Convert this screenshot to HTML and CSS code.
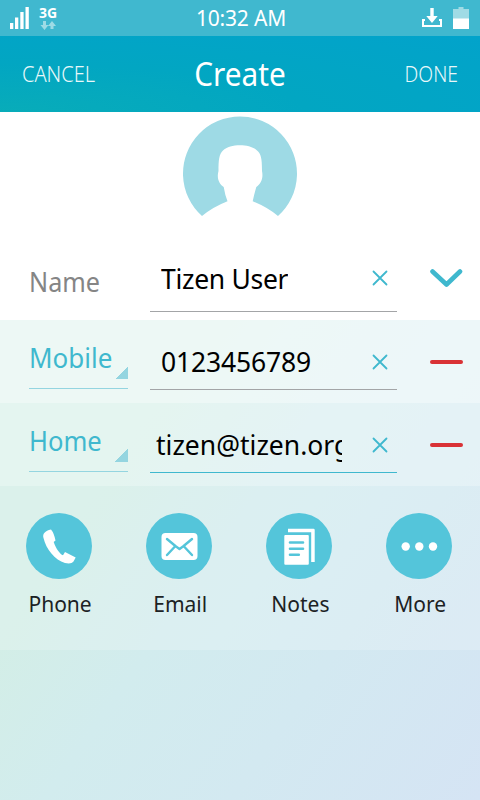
FILE: index.html
```html
<!DOCTYPE html>
<html lang="en">
<head>
<meta charset="utf-8">
<title>Create contact</title>
<link rel="stylesheet" href="styles.css">
</head>
<body>
<div class="screen">
  <div class="status">
    <svg class="signal" width="36" height="36" viewBox="0 0 36 36">
      <path fill="#fff" d="M10 23h3.300v6H10zM15 17.500h3.300v11.500H15zM20.300 12h3.300v17h-3.300zM25.500 7h3.300v22h-3.300z"/>
    </svg>
    <div class="network">
      <span class="gen">3G</span>
      <svg width="16" height="9" viewBox="0 0 16 9"><path fill="#9edbe5" d="M3 0h3v4h2.500L4.500 9 .500 4H3zM10.500 8h3V5H16L12 0 8 5h2.500z"/></svg>
    </div>
    <span class="clock">10:32 AM</span>
    <svg class="indicators" width="60" height="36" viewBox="420 0 60 36">
      <path fill="none" stroke="#fff" stroke-width="2" d="M425 20h-2V26h18v-6h-2"/>
      <path fill="#fff" d="M430.300 8h3.400v8h4l-5.700 7-5.700-7h4z"/>
      <path fill="#a0dbe5" d="M453 9h5.500V7h5v2h5.500v10h-16z"/>
      <path fill="#fff" d="M453 18.500h16V29h-16z"/>
    </svg>
  </div>
  <div class="titlebar">
    <span class="cmd cancel">CANCEL</span>
    <span class="title">Create</span>
    <span class="cmd done">DONE</span>
  </div>
  <div class="profile">
    <svg width="116" height="112" viewBox="182 116 116 112">
      <path fill="#9edae5" d="M202 216A57 57 0 1 1 278 216Q267 207 252.700 201.300Q254 195 256.300 187C261 184 263.500 178 262 171C262 158 261 154 257 150.500C250 143.500 230 143.500 223 150.500C219 154.500 218.500 160 218.500 171C216.500 178 219 184 223.700 187Q225 195 227.500 201.300Q213 207 202 216Z"/>
    </svg>
  </div>
  <div class="row name">
    <div class="label"><span class="text">Name</span></div>
    <div class="field"><span class="value user">Tizen User</span><svg class="clear" width="16" height="16" viewBox="0 0 16 16"><path d="M1.500 1.500l13 13M14.500 1.500l-13 13"/></svg></div>
    <svg class="toggle" width="34" height="22" viewBox="0 0 34 22"><path fill="none" stroke="#3fb8ce" stroke-width="4.600" stroke-linecap="round" stroke-linejoin="round" d="M2.500 4.500L16.500 17.500 30 4.500"/></svg>
  </div>
  <div class="row mobile">
    <div class="label picker"><span class="text">Mobile</span></div>
    <div class="field"><span class="value number">0123456789</span><svg class="clear" width="16" height="16" viewBox="0 0 16 16"><path d="M1.500 1.500l13 13M14.500 1.500l-13 13"/></svg></div>
    <span class="remove"></span>
  </div>
  <div class="row home">
    <div class="label picker"><span class="text">Home</span></div>
    <div class="field focused"><span class="value mail">tizen@tizen.org</span><svg class="clear" width="16" height="16" viewBox="0 0 16 16"><path d="M1.500 1.500l13 13M14.500 1.500l-13 13"/></svg></div>
    <span class="remove"></span>
  </div>
  <div class="actions">
    <div class="action">
      <svg width="66" height="66" viewBox="0 0 66 66"><circle cx="33" cy="33" r="33" fill="#54c5da"/><path fill="#fff" d="M25 16.500C19 18 16.300 20.500 17.500 25C20 36 29 47 39 50C43 51 46 50.500 47.500 48.500L49.700 44.500L39 39L37 42.300C34 41 30 36 27.700 29L29.500 27.500Q28 20 25 16.500Z"/></svg>
      <span class="caption">Phone</span>
    </div>
    <div class="action">
      <svg width="66" height="66" viewBox="0 0 66 66"><circle cx="33" cy="33" r="33" fill="#54c5da"/><rect x="15.500" y="20" width="36" height="27" rx="4" fill="#fff"/><path fill="none" stroke="#54c5da" stroke-width="2.400" stroke-linecap="round" stroke-linejoin="round" d="M21 26l9 7.500 3.500 2.500 3.500-2.500 9-7.500M28.500 34L21 42M38.500 34l7.500 8"/></svg>
      <span class="caption">Email</span>
    </div>
    <div class="action">
      <svg width="66" height="66" viewBox="0 0 66 66"><circle cx="33" cy="33" r="33" fill="#54c5da"/><path fill="#fff" d="M22 15.700h25.500q1.200 0 1.200 1.200V49h-3.500V19.200H22z"/><rect x="18.300" y="22" width="24.500" height="29.800" rx="1" fill="#fff"/><path stroke="#54c5da" stroke-width="2.600" stroke-linecap="round" d="M24 29.500h13M24 35.700h13M24 41.800h8.800"/></svg>
      <span class="caption">Notes</span>
    </div>
    <div class="action">
      <svg width="66" height="66" viewBox="0 0 66 66"><circle cx="33" cy="33" r="33" fill="#54c5da"/><g fill="#fff"><circle cx="19.700" cy="33.500" r="4.200"/><circle cx="33.300" cy="33.500" r="4.200"/><circle cx="47" cy="33.500" r="4.200"/></g></svg>
      <span class="caption">More</span>
    </div>
  </div>
</div>
</body>
</html>
```
FILE: styles.css
```css
* { box-sizing: border-box; }
body { margin: 0; font-family: "Noto Sans", "Open Sans", sans-serif; }
svg { display: block; flex: none; }
span { white-space: nowrap; }
.screen {
  width: 480px; height: 800px; overflow: hidden;
  display: flex; flex-direction: column;
  background: linear-gradient(125deg, #d3eee6 42%, #d2ecee 58%, #d3e9f1 76%, #d5e4f4 100%);
}
.status {
  height: 36px; flex: none; background: #40b8cf; color: #fff;
  display: flex; align-items: center;
}
.network { display: flex; flex-direction: column; align-items: center; gap: 2px; width: 24px; }
.gen { font: bold 14px/13px "Noto Sans", sans-serif; }
.clock { flex: 1; text-align: center; font-size: 21px; padding-left: 2px; line-height: 36px; letter-spacing: -.2px; }
.titlebar {
  height: 76px; flex: none; color: #fff;
  background: radial-gradient(ellipse at 0 100%, #08acb9, #02a6c2 45%, #02a3cb 100%);
  display: grid; grid-template-columns: 120px 1fr 120px; align-items: center;
}
.cmd { font-size: 21.500px; font-weight: 300; color: #e8f8fa; line-height: 76px; }
.cancel { padding-left: 22px; transform: scaleX(.93); transform-origin: 22px 0; }
.done { text-align: right; padding-right: 22px; transform: scaleX(.9); transform-origin: 98px 0; }
.title { text-align: center; font-size: 32px; line-height: 76px; transform: scaleX(.93); }
.profile { height: 124px; flex: none; background: #fff; display: flex; justify-content: center; padding-top: 4px; }
.row { flex: none; height: 83px; display: flex; align-items: flex-start; padding-left: 29px; }
.name { height: 84px; background: #fff; }
.mobile { background: rgba(255, 255, 255, .6); }
.home { background: rgba(255, 255, 255, .4); }
.label { width: 99px; height: 69px; font-size: 26.500px; color: #858585; line-height: 76px; }
.name .label { line-height: 92px; }
.label .text { display: inline-block; transform: scaleX(.95); transform-origin: 0 0; }
.mobile .text { transform: scaleX(.98); }
.home .text { transform: scaleX(.965); }
.picker {
  color: #3fb8ce; border-bottom: 1px solid #94d5e0;
  background: linear-gradient(135deg, transparent 50%, #94d5e0 50%) right -1px bottom 9px / 13px 13px no-repeat;
  background-position: right 0 bottom 9px;
}
.field {
  margin-left: 22px; width: 247px; height: 70px; border-bottom: 1px solid #a3a5a7;
  display: flex; align-items: center; justify-content: space-between; padding: 0 9px 0 11px;
}
.name .field { height: 76px; }
.name .field .clear { margin-bottom: -8px; }
.focused { padding-left: 6px; border-bottom-color: #3fb8ce; }
.value { font-size: 26.500px; line-height: 36px; color: #000; overflow: hidden; }
.name .value { margin-top: 11px; }
.mobile .value, .home .value { margin-top: 15px; }
.user { letter-spacing: -.3px; }
.number { letter-spacing: -.15px; }
.mail { width: 186px; }
.clear { fill: none; stroke: #3fb8ce; stroke-width: 1.800; stroke-linecap: round; }
.mobile .clear, .home .clear { margin-top: 14px; }
.toggle { margin: 31px 0 0 33px; }
.remove { width: 33px; height: 4px; margin: 40px 0 0 33px; border-radius: 2px; background: #d93236; }
.actions {
  height: 164px; flex: none; display: grid; grid-template-columns: repeat(4, 120px);
  background: rgba(255, 255, 255, .2);
}
.action { display: flex; flex-direction: column; align-items: center; padding: 27px 2px 0 0; gap: 9px; }
.caption { font-size: 22px; line-height: 30px; color: #1c2224; padding-left: 2px; transform: scaleX(.955); }
```
